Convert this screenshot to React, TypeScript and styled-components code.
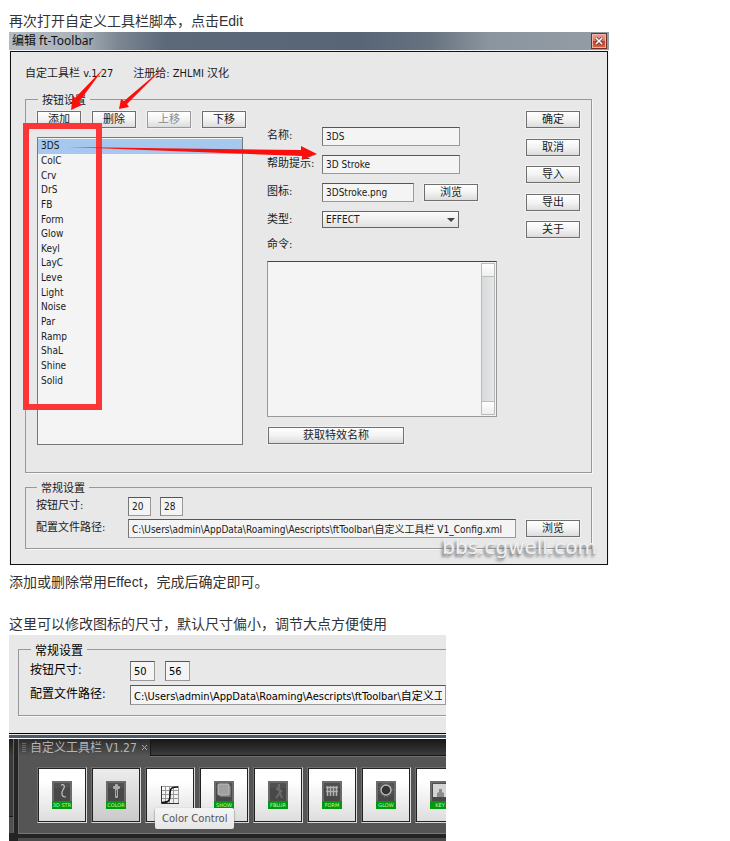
import React from "react";
import styled, { createGlobalStyle } from "styled-components";

const uiFont = `"DejaVu Sans Condensed", "Noto Sans CJK SC", sans-serif`;

const GlobalStyle = createGlobalStyle`
  * { box-sizing: border-box; }
  body {
    margin: 0;
    background: #fff;
    color: #333;
    font: 14px/21px "Liberation Sans", "Noto Sans CJK SC", sans-serif;
  }
  button, input, select, textarea { font: inherit; color: inherit; margin: 0; border-radius: 0; }
`;

const Article = styled.main`
  padding: 11px 9px 0;
`;

const Paragraph = styled.p<{ $gap?: number }>`
  margin: ${(p) => p.$gap ?? 0}px 0 0;
`;

/* ---------- dialog ---------- */

const Dialog = styled.section`
  position: relative;
  max-width: 600px;
  background: #f4f4f4;
  color: #1a1a1a;
  font: 11px/16px ${uiFont};
`;

const TitleBar = styled.header`
  display: flex;
  align-items: center;
  justify-content: space-between;
  height: 18px;
  padding: 0 2px 0 3px;
  background: linear-gradient(90deg, #b4bbc2 0, #aab2ba 12%, #7c8793 18%, #5c6979 26%, #586577 58%, #66727f 70%, #8b959f 80%, #949da6 100%);
`;

const Title = styled.h2`
  margin: 0;
  font: 400 12px/16px "Noto Sans", "Noto Sans CJK SC", sans-serif;
  color: #111;
`;

const CloseButton = styled.button`
  display: grid;
  place-items: center;
  width: 16px;
  height: 16px;
  padding: 0;
  border: 1px solid #6d3027;
  background: linear-gradient(#e9a294 0, #dc7863 48%, #c23c20 52%, #d9694a 100%);
  box-shadow: inset 0 0 0 1px #efb5a8;
`;

const DialogBody = styled.div`
  margin: 1px 1px 0;
  padding: 12px 15px 15px 14px;
  border: 1px solid #111;
  background: #e8e8e8;
`;

const Meta = styled.div`
  display: flex;
  gap: 20px;
  height: 18px;
  line-height: 20px;
  margin-bottom: 9px;
`;

const Group = styled.fieldset<{ $pad: string; $gap?: number; $open?: boolean }>`
  margin: ${(p) => p.$gap ?? 0}px 0 0;
  padding: ${(p) => p.$pad};
  min-width: 0;
  border: 1px solid #999;
  border-right-width: ${(p) => (p.$open ? 0 : 1)}px;
  box-shadow: 1px 1px 0 #f8f8f8;
`;

const Legend = styled.legend`
  margin-left: 1px;
  padding: 0 4px;
  height: 16px;
  line-height: 20px;
`;

const Columns = styled.div`
  display: grid;
  grid-template-columns: minmax(0, 206fr) minmax(0, 235fr) 54px;
  column-gap: 24px;
`;

const Button = styled.button<{ $width?: number }>`
  flex: none;
  width: ${(p) => p.$width ?? 54}px;
  height: 17px;
  padding: 0;
  border: 1px solid #6f6f6f;
  background: linear-gradient(#fff, #f3f3f3 50%, #dcdcdc);
  box-shadow: 0 0 0 1px #f1f1f1;
  line-height: 15px;
  text-align: center;
  white-space: nowrap;
  &:disabled { color: #8a8a8a; border-color: #999; }
`;

const ButtonRow = styled.div`
  display: flex;
  gap: 11px;
  margin-bottom: 9px;
`;

const ListBox = styled.ul`
  display: grid;
  grid-auto-rows: 1fr;
  height: 308px;
  margin: 0;
  padding: 1px 0 56px;
  list-style: none;
  border: 1px solid #777;
  background: #f4f4f4;
  font-size: 10px;
`;

const ListItem = styled.li<{ $selected?: boolean }>`
  display: flex;
  align-items: center;
  min-height: 0;
  padding-left: 3px;
  line-height: 14px;
  background: ${(p) => (p.$selected ? "#a6c8ee" : "transparent")};
`;

const Fields = styled.div`
  padding: 16px 5px 0 0;
`;

const FieldRow = styled.div`
  display: flex;
  align-items: flex-start;
  height: 28px;
`;

const Label = styled.label<{ $width?: number }>`
  flex: none;
  width: ${(p) => p.$width ?? 55}px;
  line-height: 18px;
  white-space: nowrap;
`;

const TextInput = styled.input<{ $width?: number; $large?: boolean }>`
  flex: ${(p) => (p.$width ? "0 1 auto" : "1 1 0")};
  width: ${(p) => (p.$width ? `${p.$width}px` : "auto")};
  min-width: 0;
  height: ${(p) => (p.$large ? 20 : 19)}px;
  padding: 0 3px;
  border: 1px solid #999;
  border-top-color: #555;
  border-left-color: #777;
  outline: 0;
  background: #f4f4f4;
  font-size: ${(p) => (p.$large ? 11 : 10)}px;
`;

const SelectBox = styled.div`
  position: relative;
  width: 137px;
  svg { position: absolute; right: 4px; top: 7px; pointer-events: none; }
`;

const Select = styled.select`
  display: block;
  appearance: none;
  width: 100%;
  height: 17px;
  padding: 0 3px;
  border: 1px solid #666;
  background: linear-gradient(#fbfbfb, #e2e2e2);
  font-size: 10px;
  line-height: 15px;
`;

const CommandLabel = styled.label`
  display: block;
  height: 22px;
  line-height: 16px;
  margin-top: -2px;
  margin-bottom: 2px;
`;

const CommandBox = styled.div`
  display: flex;
  height: 156px;
  padding: 1px 1px 1px 0;
  border: 1px solid #999;
  border-top-color: #444;
  background: #f4f4f4;
`;

const CommandText = styled.textarea`
  flex: 1;
  min-width: 0;
  padding: 2px;
  border: 0;
  outline: 0;
  resize: none;
  background: transparent;
`;

const ScrollTrack = styled.div`
  display: flex;
  flex-direction: column;
  justify-content: space-between;
  width: 14px;
  border: 1px solid #bbb;
  background: linear-gradient(90deg, #d6dada, #e6e8e8);
`;

const ScrollButton = styled.button`
  height: 12px;
  padding: 0;
  border: 0;
  background: linear-gradient(#fff, #eee);
  box-shadow: 0 0 0 1px #bbb;
`;

const FetchRow = styled.div`
  padding: 10px 0 0 1px;
`;

const SideButtons = styled.div`
  display: flex;
  flex-direction: column;
  justify-content: space-between;
  height: 127px;
`;

const SettingRow = styled.div<{ $height: number }>`
  display: flex;
  align-items: flex-start;
  height: ${(p) => p.$height}px;
`;

const Spacer = styled.span<{ $width: number }>`
  flex: none;
  width: ${(p) => p.$width}px;
`;

const CenteredSlot = styled.div`
  display: flex;
  padding-top: 1px;
`;

const Watermark = styled.div`
  position: absolute;
  right: 12px;
  bottom: 5px;
  font: 20px/26px "DejaVu Sans", sans-serif;
  color: #f0f0f3;
  text-shadow: -2px 3px 3px #777, 0 1px 1px #bbb;
`;

const RedFrame = styled.div`
  position: absolute;
  left: 14px;
  top: 91px;
  width: 79px;
  height: 287px;
  border: 6px solid #fc3636;
  pointer-events: none;
`;

const Arrows = styled.svg`
  position: absolute;
  left: 0;
  top: 0;
  pointer-events: none;
`;

/* ---------- toolbar preview ---------- */

const Preview = styled.section`
  max-width: 437px;
  overflow: hidden;
  color: #000;
  font: 12px/16px ${uiFont};
`;

const PreviewSettings = styled.div`
  padding: 6px 0 17px 9px;
  background: #e8e8e8;
`;

const WindowEdge = styled.div`
  height: 6px;
  border-top: 1px solid #000;
  border-bottom: 1px solid #fff;
  background: linear-gradient(#e8e8e8 0 1px, #4d5967 1px);
`;

const DarkArea = styled.div`
  display: flex;
  gap: 4px;
  height: 102px;
  background: #242424;
`;

const NeighbourPanel = styled.div`
  flex: none;
  width: 5px;
  margin-bottom: 8px;
  border-right: 1px solid #666;
  background: linear-gradient(#1c1c1c, #3a3a3a 16px 77px, #181818 77px 78px, #505050 78px);
`;

const ToolPanel = styled.div`
  flex: 1;
  min-width: 0;
  border-bottom: 3px solid #4a4a4a;
`;

const PanelInner = styled.div`
  height: 95px;
  border-left: 1px solid #6a6a6a;
  border-bottom: 1px solid #777;
  background: #555;
`;

const TabStrip = styled.div`
  display: flex;
  height: 17px;
`;

const Tab = styled.div`
  display: flex;
  align-items: center;
  gap: 4px;
  flex: none;
  padding: 0 2px 0 3px;
  color: #b4b4b4;
  background: linear-gradient(#2c2c2c, #555);
  white-space: nowrap;
`;

const TabClose = styled.button`
  display: grid;
  padding: 0;
  border: 0;
  background: none;
`;

const TabRest = styled.div`
  flex: 1;
  border-left: 1px solid #161616;
  border-bottom: 1px solid #161616;
  box-shadow: 0 1px 0 #707070;
  background: linear-gradient(#161616, #3c3c3c);
`;

const ToolRow = styled.div`
  display: flex;
  gap: 4px;
  padding: 11px 0 0 18px;
`;

const ToolButton = styled.button<{ $active?: boolean }>`
  position: relative;
  display: grid;
  place-items: center;
  flex: none;
  width: 50px;
  height: 56px;
  padding: 0;
  border: 1px solid #6e6e6e;
  border-right-color: #d8d8d8;
  border-bottom-color: #d8d8d8;
  background: ${(p) => (p.$active ? "linear-gradient(#ededed, #c9c9c9)" : "linear-gradient(#fff, #fff 25%, #dcdcdc)")};
  box-shadow: inset 0 0 0 1px #222;
`;

const ToolTile = styled.span`
  display: block;
  width: 20px;
  height: 28px;
  background: #009a0b;
  overflow: hidden;
  svg { display: block; }
`;

const TileText = styled.span`
  display: flex;
  justify-content: center;
  height: 8px;
  font: 5px/8px "DejaVu Sans", sans-serif;
  color: #c4f5c4;
  white-space: nowrap;
`;

const Tooltip = styled.span`
  position: absolute;
  left: 9px;
  top: 40px;
  z-index: 1;
  padding: 0 7px;
  border-radius: 2px;
  background: linear-gradient(#f4f4f4, #e6e6e6);
  box-shadow: 0 1px 2px #555;
  color: #555;
  font: 10px/21px "DejaVu Sans", sans-serif;
  white-space: nowrap;
`;

const effects = ["3DS", "ColC", "Crv", "DrS", "FB", "Form", "Glow", "Keyl", "LayC", "Leve", "Light", "Noise", "Par", "Ramp", "ShaL", "Shine", "Solid"];

const glyphs: Record<string, React.ReactNode> = {
  "3D STR": <path d="M9 4c3-1 4 1 3 3-1 2-3 4-2 6 0 2 2 3 4 3" fill="none" stroke="#c4c4c4" strokeWidth="1.2" />,
  COLOR: (
    <g fill="#aaa">
      <rect x="9" y="3" width="3" height="14" rx="1" />
      <rect x="7" y="5" width="7" height="3" rx="1" />
      <rect x="10" y="9" width="1" height="6" fill="#555" />
    </g>
  ),
  SHOW: (
    <g>
      <rect x="6" y="5" width="11" height="11" rx="1" fill="#777" />
      <rect x="4" y="3" width="11" height="11" rx="1" fill="#a0a0a0" stroke="#bcbcbc" />
    </g>
  ),
  FBLUR: <path d="M11 3v3l-2 2 3 2-1 3-3 4M10 7l4 4M12 12l2 5" fill="none" stroke="#777" strokeWidth="2" opacity="0.7" />,
  FORM: <path d="M5.500 5v10M8.500 5v10M11.500 5v10M14.500 5v10M4 6.500h12M4 10.500h12" fill="none" stroke="#b0b0b0" strokeWidth="1.600" />,
  GLOW: (
    <g fill="none">
      <circle cx="10" cy="9" r="7" stroke="#8a8a8a" strokeWidth="1" strokeDasharray="1 2" />
      <circle cx="10" cy="9" r="5" fill="#333" stroke="#b8b8b8" strokeWidth="1.5" />
    </g>
  ),
  KEY: (
    <g>
      <rect x="3" y="3" width="15" height="13" fill="#d4d4d4" />
      <path d="M7 16v-4l2-1V8h3v3l2 1v4z" fill="#8c8c8c" />
    </g>
  ),
};

function Tile({ name }: { name: string }) {
  return (
    <ToolTile>
      <svg width="20" height="20" viewBox="0 0 20 20" aria-hidden="true">
        <rect width="20" height="20" fill="#484848" />
        <path d="M0 0h20v20h-2V2H2v18H0z" fill="#6b6b6b" />
        <path d="M2 2h16v5H2z" fill="#505050" />
        {glyphs[name]}
      </svg>
      <TileText>{name}</TileText>
    </ToolTile>
  );
}

function CurveIcon() {
  return (
    <svg width="18" height="18" viewBox="0 0 18 18" aria-hidden="true">
      <path d="M4.500 0v17M8.500 0v17M12.500 0v17M17.500 0v17M0 .5h18M0 4.500h18M0 8.500h18M0 12.500h18" stroke="#999" fill="none" />
      <path d="M.5 0v17.500H18" stroke="#333" fill="none" />
      <path d="M1 16.500c6 0 8-1 8-7.500S10 1 17 1" stroke="#111" strokeWidth="1.600" fill="none" />
    </svg>
  );
}

export default function App() {
  return (
    <>
      <GlobalStyle />
      <Article>
        <Paragraph>再次打开自定义工具栏脚本，点击Edit</Paragraph>

        <Dialog aria-label="编辑 ft-Toolbar">
          <TitleBar>
            <Title>编辑 ft-Toolbar</Title>
            <CloseButton aria-label="关闭">
              <svg width="8" height="8" viewBox="0 0 8 8" aria-hidden="true">
                <path d="M1 1l6 6M7 1L1 7" stroke="#5b3b3b" strokeWidth="3" />
                <path d="M1 1l6 6M7 1L1 7" stroke="#fff" strokeWidth="1.600" />
              </svg>
            </CloseButton>
          </TitleBar>
          <DialogBody>
            <Meta>
              <span>自定工具栏 v.1.27</span>
              <span>注册给: ZHLMI 汉化</span>
            </Meta>

            <Group $pad="4px 11px 27px 11px">
              <Legend>按钮设置</Legend>
              <Columns>
                <div>
                  <ButtonRow>
                    <Button $width={44}>添加</Button>
                    <Button $width={44}>删除</Button>
                    <Button $width={44} disabled>上移</Button>
                    <Button $width={44}>下移</Button>
                  </ButtonRow>
                  <ListBox>
                    {effects.map((name, i) => (
                      <ListItem key={name} $selected={i === 0}>{name}</ListItem>
                    ))}
                  </ListBox>
                </div>

                <Fields>
                  <FieldRow>
                    <Label htmlFor="name">名称:</Label>
                    <TextInput id="name" $width={138} defaultValue="3DS" />
                  </FieldRow>
                  <FieldRow>
                    <Label htmlFor="hint">帮助提示:</Label>
                    <TextInput id="hint" $width={138} defaultValue="3D Stroke" />
                  </FieldRow>
                  <FieldRow>
                    <Label htmlFor="icon">图标:</Label>
                    <TextInput id="icon" $width={92} defaultValue="3DStroke.png" />
                    <Spacer $width={10} />
                    <CenteredSlot><Button>浏览</Button></CenteredSlot>
                  </FieldRow>
                  <FieldRow>
                    <Label htmlFor="type">类型:</Label>
                    <SelectBox>
                      <Select id="type" defaultValue="EFFECT">
                        <option>EFFECT</option>
                      </Select>
                      <svg width="8" height="4" viewBox="0 0 8 4" aria-hidden="true">
                        <path d="M0 0h8L4 4z" fill="#444" />
                      </svg>
                    </SelectBox>
                  </FieldRow>
                  <CommandLabel htmlFor="command">命令:</CommandLabel>
                  <CommandBox>
                    <CommandText id="command" />
                    <ScrollTrack>
                      <ScrollButton aria-label="向上滚动" />
                      <ScrollButton aria-label="向下滚动" />
                    </ScrollTrack>
                  </CommandBox>
                  <FetchRow>
                    <Button $width={136}>获取特效名称</Button>
                  </FetchRow>
                </Fields>

                <SideButtons>
                  {["确定", "取消", "导入", "导出", "关于"].map((t) => (
                    <Button key={t}>{t}</Button>
                  ))}
                </SideButtons>
              </Columns>
            </Group>

            <Group $pad="2px 11px 10px 10px" $gap={6}>
              <Legend>常规设置</Legend>
              <SettingRow $height={22}>
                <Label htmlFor="w1" $width={92}>按钮尺寸:</Label>
                <TextInput id="w1" $width={23} defaultValue="20" />
                <Spacer $width={9} />
                <TextInput aria-label="按钮高度" $width={23} defaultValue="28" />
              </SettingRow>
              <SettingRow $height={19}>
                <Label htmlFor="path1" $width={92}>配置文件路径:</Label>
                <TextInput id="path1" defaultValue="C:\Users\admin\AppData\Roaming\Aescripts\ftToolbar\自定义工具栏 V1_Config.xml" />
                <Spacer $width={10} />
                <CenteredSlot><Button>浏览</Button></CenteredSlot>
              </SettingRow>
            </Group>
          </DialogBody>

          <Watermark>bbs.cgwell.com</Watermark>
          <RedFrame />
          <Arrows width="320" height="140" viewBox="0 0 320 140" aria-hidden="true">
            <g fill="#fb0f0c">
              <path d="M95 36L66 66l-2-3-2 15 11-5-3-3z" />
              <path d="M154 36l-39 33-3-2-2 10 10-2-2-3z" />
              <path d="M59 115l233 3v-4l16 8-15 6v-4z" />
            </g>
          </Arrows>
        </Dialog>

        <Paragraph $gap={7}>添加或删除常用Effect，完成后确定即可。</Paragraph>
        <Paragraph $gap={21}>这里可以修改图标的尺寸，默认尺寸偏小，调节大点方便使用</Paragraph>

        <Preview>
          <PreviewSettings>
            <Group $pad="4px 0 10px 11px" $open>
              <Legend>常规设置</Legend>
              <SettingRow $height={24}>
                <Label htmlFor="w2" $width={100}>按钮尺寸:</Label>
                <TextInput id="w2" $width={25} $large defaultValue="50" />
                <Spacer $width={10} />
                <TextInput aria-label="按钮高度" $width={25} $large defaultValue="56" />
              </SettingRow>
              <SettingRow $height={20}>
                <Label htmlFor="path2" $width={100}>配置文件路径:</Label>
                <TextInput id="path2" $large defaultValue="C:\Users\admin\AppData\Roaming\Aescripts\ftToolbar\自定义工具栏" />
              </SettingRow>
            </Group>
          </PreviewSettings>
          <WindowEdge />
          <DarkArea>
            <NeighbourPanel />
            <ToolPanel>
              <PanelInner>
                <TabStrip>
                  <Tab>
                    <svg width="4" height="10" viewBox="0 0 4 10" aria-hidden="true">
                      <path d="M1 0v10M3 0v10" stroke="#999" strokeDasharray="1 1" />
                    </svg>
                    <span>自定义工具栏 V1.27</span>
                    <TabClose aria-label="关闭标签">
                      <svg width="7" height="7" viewBox="0 0 7 7" aria-hidden="true">
                        <path d="M1 1l5 5M6 1L1 6" stroke="#aaa" />
                      </svg>
                    </TabClose>
                  </Tab>
                  <TabRest />
                </TabStrip>
                <ToolRow>
                  <ToolButton><Tile name="3D STR" /></ToolButton>
                  <ToolButton $active><Tile name="COLOR" /></ToolButton>
                  <ToolButton aria-label="曲线">
                    <CurveIcon />
                    <Tooltip role="tooltip">Color Control</Tooltip>
                  </ToolButton>
                  <ToolButton><Tile name="SHOW" /></ToolButton>
                  <ToolButton><Tile name="FBLUR" /></ToolButton>
                  <ToolButton><Tile name="FORM" /></ToolButton>
                  <ToolButton><Tile name="GLOW" /></ToolButton>
                  <ToolButton><Tile name="KEY" /></ToolButton>
                </ToolRow>
              </PanelInner>
            </ToolPanel>
          </DarkArea>
        </Preview>
      </Article>
    </>
  );
}
